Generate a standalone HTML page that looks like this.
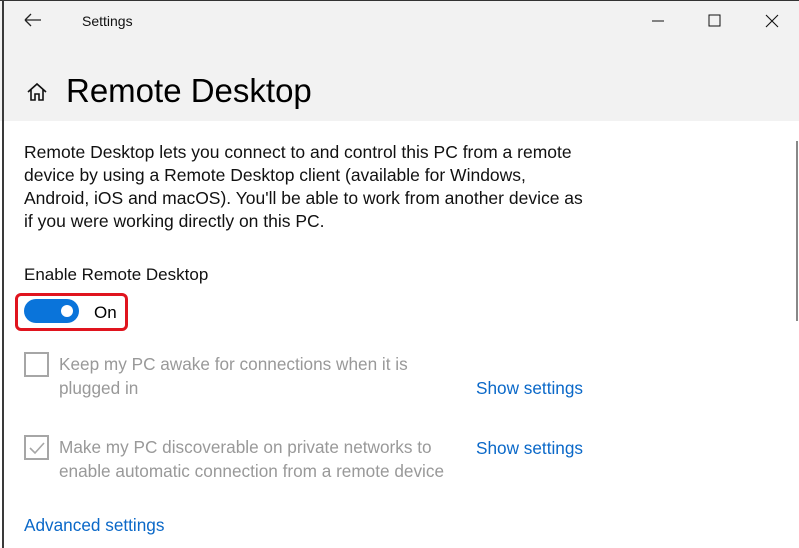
<!DOCTYPE html>
<html><head><meta charset="utf-8"><style>
*{margin:0;padding:0;box-sizing:border-box}
body{width:799px;height:548px;overflow:hidden;background:#fff;font-family:"Liberation Sans",sans-serif;position:relative}
.hdr{position:absolute;left:0;top:0;width:799px;height:121px;background:#f2f2f2;border-top:1px solid #333}
.lb{position:absolute;left:2px;top:0;width:2px;height:548px;background:#3a3a3a}
.t{position:absolute;white-space:nowrap}
.sb{position:absolute;left:796px;top:141px;width:2px;height:180px;background:#888}
</style></head><body>
<div class="hdr"></div>
<div class="lb"></div>
<svg class="t" style="left:24px;top:13px" width="18" height="14"><path d="M1 7H17M1 7L7 1M1 7L7 13" stroke="#222" stroke-width="1.3" fill="none"/></svg>
<div class="t" style="left:82px;top:13px;font-size:14px;color:#111">Settings</div>
<svg class="t" style="left:651px;top:20px" width="14" height="2"><path d="M1 1H13" stroke="#111" stroke-width="1"/></svg>
<svg class="t" style="left:708px;top:14px" width="13" height="13"><rect x="1" y="1" width="11" height="11" stroke="#111" fill="none"/></svg>
<svg class="t" style="left:765px;top:14px" width="14" height="14"><path d="M1 1L13 13M13 1L1 13" stroke="#111" stroke-width="1.1"/></svg>
<svg class="t" style="left:26px;top:82px" width="22" height="20"><path d="M2 10L11 2L20 10M5 7.5V18H9V12H13V18H17V7.5" stroke="#111" stroke-width="1.6" fill="none"/></svg>
<div class="t" style="left:66px;top:72px;font-size:33px;color:#000">Remote Desktop</div>
<div class="sb"></div>
<div class="t" style="left:24px;top:141px;font-size:17.5px;line-height:23px;color:#111">Remote Desktop lets you connect to and control this PC from a remote<br>device by using a Remote Desktop client (available for Windows,<br>Android, iOS and macOS). You'll be able to work from another device as<br>if you were working directly on this PC.</div>
<div class="t" style="left:24px;top:265px;font-size:17px;color:#111">Enable Remote Desktop</div>
<div class="t" style="left:15px;top:293px;width:113px;height:38px;border:3px solid #e0141e;border-radius:6px;background:#fff"></div>
<div class="t" style="left:24px;top:299px;width:55px;height:24px;border-radius:12px;background:#0a74da"></div>
<div class="t" style="left:61px;top:305px;width:12px;height:12px;border-radius:6px;background:#fff"></div>
<div class="t" style="left:94px;top:303px;font-size:17px;color:#000">On</div>
<div class="t" style="left:24px;top:352px;width:25px;height:25px;border:2px solid #a6a6a6"></div>
<div class="t" style="left:59px;top:352px;font-size:17.2px;line-height:24px;color:#999">Keep my PC awake for connections when it is<br>plugged in</div>
<div class="t" style="left:476px;top:378px;font-size:17.2px;color:#0a68c8">Show settings</div>
<div class="t" style="left:24px;top:435px;width:25px;height:25px;border:2px solid #a6a6a6"></div>
<svg class="t" style="left:27px;top:438px" width="20" height="20"><path d="M3 10L8 15L17 5" stroke="#a6a6a6" stroke-width="1.6" fill="none"/></svg>
<div class="t" style="left:59px;top:435px;font-size:17.2px;line-height:24px;color:#999">Make my PC discoverable on private networks to<br>enable automatic connection from a remote device</div>
<div class="t" style="left:476px;top:438px;font-size:17.2px;color:#0a68c8">Show settings</div>
<div class="t" style="left:24px;top:515px;font-size:17.2px;color:#0a68c8">Advanced settings</div>
</body></html>
